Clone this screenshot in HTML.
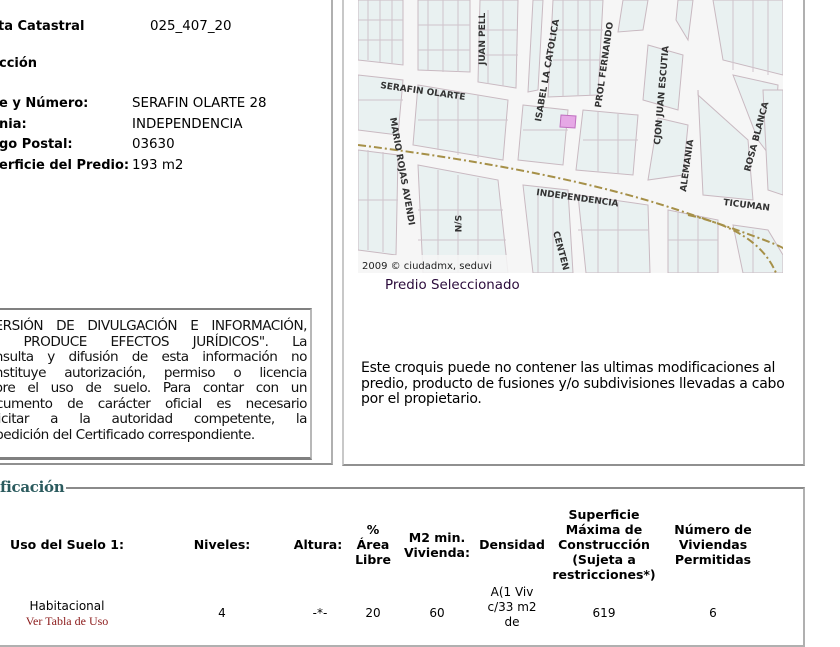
<!DOCTYPE html>
<html><head><meta charset="utf-8"><style>
*{margin:0;padding:0;box-sizing:border-box}
body{width:840px;height:630px;overflow:hidden;background:#fff;position:relative;font-family:"DejaVu Sans",Verdana,sans-serif;font-size:13.4px;color:#000}
.a{position:absolute;white-space:nowrap}
.b{font-weight:bold;font-size:13px}
.panel{position:absolute;border:2px solid #c8c8c8;border-right-color:#b0b0b0;border-bottom-color:#909090}
.disc{position:absolute;left:-40px;top:308px;width:352px;height:152px;border:2px solid #b8b8b8;border-top-color:#808080;border-left-color:#808080;border-bottom:3px solid #808080;overflow:hidden}
.disc div{position:absolute;left:18px;width:327px;white-space:nowrap;text-align:justify;text-align-last:justify;font-size:13.6px;line-height:15.3px;color:#111;letter-spacing:-0.5px}
.fs{position:absolute;left:-20px;top:487px;width:825px;height:160px;border:2px solid #b0b0b0;border-top-color:#8a8a8a}
.lg{position:absolute;left:0;top:478px;background:#fff;padding-right:2px;font-family:"DejaVu Serif","Liberation Serif",serif;font-weight:bold;font-size:15px;color:#2b5b5e;letter-spacing:-0.3px}
.th{position:absolute;text-align:center;font-weight:bold;font-size:12.5px;line-height:15px;transform:translateX(-50%);white-space:nowrap}
.td{position:absolute;text-align:center;font-size:12px;line-height:15px;transform:translateX(-50%);white-space:nowrap}
</style></head><body>
<div class="panel" style="left:-10px;top:-10px;width:343px;height:475px"></div>
<div class="panel" style="left:342px;top:-10px;width:463px;height:476px"></div>

<div class="a b" style="left:-2px;top:19px">ta Catastral</div>
<div class="a" style="left:150px;top:19px">025_407_20</div>
<div class="a b" style="left:-1px;top:56px">cción</div>
<div class="a b" style="left:-1px;top:96px">e y Número:</div>
<div class="a" style="left:132px;top:96px">SERAFIN OLARTE 28</div>
<div class="a b" style="left:-1px;top:117px">nia:</div>
<div class="a" style="left:132px;top:117px">INDEPENDENCIA</div>
<div class="a b" style="left:-1px;top:137px">go Postal:</div>
<div class="a" style="left:132px;top:137px">03630</div>
<div class="a b" style="left:-1px;top:158px">erficie del Predio:</div>
<div class="a" style="left:132px;top:158px">193 m2</div>

<div class="disc">
<div style="top:9px">"VERSIÓN DE DIVULGACIÓN E INFORMACIÓN,</div>
<div style="top:24.5px">NO PRODUCE EFECTOS JURÍDICOS". La</div>
<div style="top:40px">consulta y difusión de esta información no</div>
<div style="top:55.5px">constituye autorización, permiso o licencia</div>
<div style="top:71px">sobre el uso de suelo. Para contar con un</div>
<div style="top:86.5px">documento de carácter oficial es necesario</div>
<div style="top:102px">solicitar a la autoridad competente, la</div>
<div style="top:117.5px;text-align-last:left">expedición del Certificado correspondiente.</div>
</div>

<svg class="a" style="left:358px;top:0" width="425" height="273" viewBox="0 0 425 273">
<rect width="425" height="273" fill="#f6f6f6"/>
<g fill="#e9f1f1" stroke="#c9b9c1" stroke-width="1">
<polygon points="0,0 45,0 45,65 0,60"/>
<polygon points="60,0 112,0 112,72 60,70"/>
<polygon points="122,0 160,0 158,88 120,82"/>
<polygon points="175,0 185,0 180,90 170,92"/>
<polygon points="195,0 245,0 240,95 190,97"/>
<polygon points="265,0 290,0 285,30 260,32"/>
<polygon points="290,45 325,55 320,110 285,100"/>
<polygon points="335,0 320,0 318,20 330,40"/>
<polygon points="355,0 425,0 425,75 365,60"/>
<polygon points="0,75 45,80 40,135 0,130"/>
<polygon points="60,85 150,100 145,160 55,145"/>
<polygon points="165,105 210,110 205,165 160,160"/>
<polygon points="225,110 280,115 275,175 218,170"/>
<polygon points="300,118 330,125 325,175 290,180"/>
<polygon points="375,75 420,85 415,160 400,140"/>
<polygon points="340,90 340,95 390,140 395,200 345,195"/>
<polygon points="405,90 425,90 425,195 410,190"/>
<polygon points="0,150 40,155 38,255 0,250"/>
<polygon points="60,165 140,180 150,273 65,273"/>
<polygon points="165,185 210,190 215,273 175,273"/>
<polygon points="220,195 290,205 292,273 228,273"/>
<polygon points="310,210 360,220 360,273 310,273"/>
<polygon points="375,225 410,230 425,255 425,273 385,273"/>
</g>
<g stroke="#d0c4cc" stroke-width="1" fill="none">
<path d="M10,0V60M22,0V62M34,0V64M70,0V70M85,0V72M100,0V72M130,10V84M145,0V86M205,0V96M220,0V96M232,0V95M0,20H45M0,40H45M60,25H112M60,50H112M122,30H160M122,55H160M195,30H245M195,60H245M375,0V70M395,0V72M410,0V75M0,100H45M60,120H150M165,130H210M225,140H280M80,90V150M100,95V155M120,95V158M240,112V172M260,114V174M10,150V250M25,152V252M0,200H40M80,170V273M100,175V273M120,178V273M60,210H145M60,240H148M180,190V273M195,190V273M240,200V273M260,202V273M320,212V273M340,215V273M395,230V273M220,230H290M310,240H360"/>
</g>
<polygon points="203,115 218,116 217,128 202,127" fill="#e6a8e6" stroke="#c070c0"/>
<path d="M0,145 Q200,170 320,210 T425,250" stroke="#a69048" stroke-width="2" fill="none" stroke-dasharray="8,3,2,3"/>
<path d="M330,215 Q400,230 418,273" stroke="#a69048" stroke-width="2" fill="none" stroke-dasharray="8,3,2,3"/>
<g font-family="DejaVu Sans,sans-serif" font-size="9" font-weight="bold" fill="#333">
<text x="22" y="88" transform="rotate(8 22 88)">SERAFIN OLARTE</text>
<text x="0" y="0" transform="translate(127,65) rotate(-90)">JUAN PELL</text>
<text x="0" y="0" transform="translate(183,122) rotate(-80)">ISABEL LA CATOLICA</text>
<text x="0" y="0" transform="translate(243,108) rotate(-82)">PROL FERNANDO</text>
<text x="0" y="0" transform="translate(302,145) rotate(-85)">CJON JUAN ESCUTIA</text>
<text x="0" y="0" transform="translate(328,192) rotate(-82)">ALEMANIA</text>
<text x="0" y="0" transform="translate(392,172) rotate(-75)">ROSA BLANCA</text>
<text x="0" y="0" transform="translate(32,118) rotate(80)">MARIO ROJAS AVENDI</text>
<text x="0" y="0" transform="translate(97,215) rotate(90)">S/N</text>
<text x="0" y="0" transform="translate(195,232) rotate(75)">CENTEN</text>
<text x="178" y="195" transform="rotate(8 178 195)">INDEPENDENCIA</text>
<text x="365" y="205" transform="rotate(7 365 205)">TICUMAN</text>
</g>
<rect x="0" y="255" width="160" height="18" fill="#f6f6f6" opacity=".85"/>
<text x="4" y="269" font-family="DejaVu Sans,sans-serif" font-size="10" fill="#222">2009 © ciudadmx, seduvi</text>
</svg>
<div class="a" style="left:385px;top:278px;color:#2a0a3a">Predio Seleccionado</div>

<div class="a" style="left:361px;top:361px;line-height:15.5px;font-size:14px;letter-spacing:-0.25px">Este croquis puede no contener las ultimas modificaciones al<br>predio, producto de fusiones y/o subdivisiones llevadas a cabo<br>por el propietario.</div>

<div class="fs"></div>
<div class="lg">ficación</div>

<div>
<div class="th" style="left:67px;top:537px">Uso del Suelo 1:</div>
<div class="th" style="left:222px;top:537px">Niveles:</div>
<div class="th" style="left:318px;top:537px">Altura:</div>
<div class="th" style="left:373px;top:522px">%<br>Área<br>Libre</div>
<div class="th" style="left:437px;top:530px">M2 min.<br>Vivienda:</div>
<div class="th" style="left:512px;top:537px">Densidad</div>
<div class="th" style="left:604px;top:507px">Superficie<br>Máxima de<br>Construcción<br>(Sujeta a<br>restricciones*)</div>
<div class="th" style="left:713px;top:522px">Número de<br>Viviendas<br>Permitidas</div>
<div class="td" style="left:67px;top:599px">Habitacional<br><span style="font-family:'Liberation Serif',serif;color:#8b1a1a;font-size:12px">Ver Tabla de Uso</span></div>
<div class="td" style="left:222px;top:606px">4</div>
<div class="td" style="left:320px;top:606px">-*-</div>
<div class="td" style="left:373px;top:606px">20</div>
<div class="td" style="left:437px;top:606px">60</div>
<div class="td" style="left:512px;top:585px">A(1 Viv<br>c/33 m2<br>de</div>
<div class="td" style="left:604px;top:606px">619</div>
<div class="td" style="left:713px;top:606px">6</div>
</div>
</body></html>
